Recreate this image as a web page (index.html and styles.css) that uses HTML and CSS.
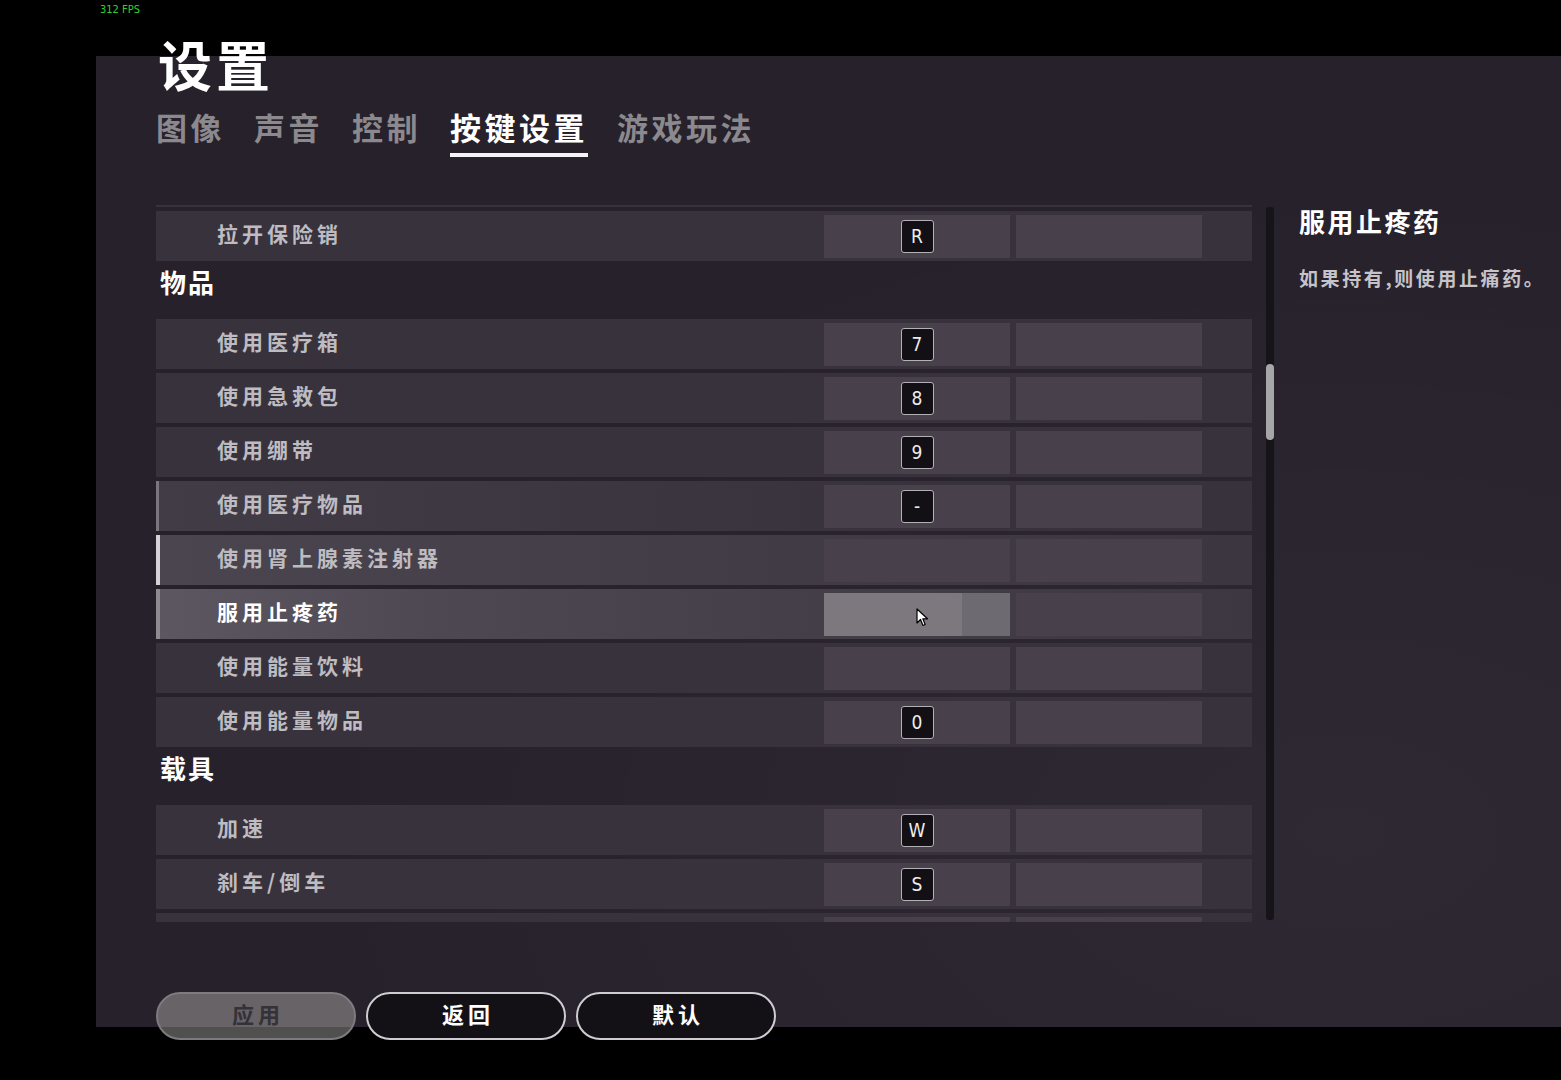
FILE: index.html
```html
<!DOCTYPE html>
<html lang="zh-CN">
<head>
    <meta charset="UTF-8">
    <meta name="viewport" content="width=device-width, initial-scale=1.0">
    <title>设置</title>
    <link rel="stylesheet" href="styles.css">
</head>
<body>
    <div class="screen">
        <div class="fps">312 FPS</div>
        <div class="panel">
            <h1 class="title">设置</h1>
            <nav class="tabs">
                <span class="tab">图像</span>
                <span class="tab">声音</span>
                <span class="tab">控制</span>
                <span class="tab active">按键设置</span>
                <span class="tab">游戏玩法</span>
            </nav>

            <div class="content">
                <div class="list-view">
                    <div class="list">
                        <!-- scrolled past, only its bottom edge shows -->
                        <div class="row">
                            <span class="label"></span>
                            <div class="cell"></div>
                            <div class="cell"></div>
                        </div>
                        <div class="row">
                            <span class="label">拉开保险销</span>
                            <div class="cell"><span class="key">R</span></div>
                            <div class="cell"></div>
                        </div>

                        <div class="section">物品</div>
                        <div class="row">
                            <span class="label">使用医疗箱</span>
                            <div class="cell"><span class="key">7</span></div>
                            <div class="cell"></div>
                        </div>
                        <div class="row">
                            <span class="label">使用急救包</span>
                            <div class="cell"><span class="key">8</span></div>
                            <div class="cell"></div>
                        </div>
                        <div class="row">
                            <span class="label">使用绷带</span>
                            <div class="cell"><span class="key">9</span></div>
                            <div class="cell"></div>
                        </div>
                        <div class="row fade-1">
                            <span class="label">使用医疗物品</span>
                            <div class="cell"><span class="key">-</span></div>
                            <div class="cell"></div>
                        </div>
                        <div class="row fade-2">
                            <span class="label">使用肾上腺素注射器</span>
                            <div class="cell"></div>
                            <div class="cell"></div>
                        </div>
                        <div class="row selected">
                            <span class="label">服用止疼药</span>
                            <div class="cell focus">
                                <svg class="cursor" width="13" height="19" viewBox="0 0 13 19">
                                    <path d="M1 1 L1 15 L4.5 11.5 L7 17.5 L9.2 16.5 L6.8 10.8 L11.5 10.8 Z" fill="#fff" stroke="#000" stroke-width="1.2" stroke-linejoin="round"/>
                                </svg>
                            </div>
                            <div class="cell"></div>
                        </div>
                        <div class="row">
                            <span class="label">使用能量饮料</span>
                            <div class="cell"></div>
                            <div class="cell"></div>
                        </div>
                        <div class="row">
                            <span class="label">使用能量物品</span>
                            <div class="cell"><span class="key">0</span></div>
                            <div class="cell"></div>
                        </div>

                        <div class="section">载具</div>
                        <div class="row">
                            <span class="label">加速</span>
                            <div class="cell"><span class="key">W</span></div>
                            <div class="cell"></div>
                        </div>
                        <div class="row">
                            <span class="label">刹车/倒车</span>
                            <div class="cell"><span class="key">S</span></div>
                            <div class="cell"></div>
                        </div>
                        <!-- cut by the bottom edge -->
                        <div class="row">
                            <span class="label"></span>
                            <div class="cell"><span class="key"></span></div>
                            <div class="cell"></div>
                        </div>
                    </div>
                </div>

                <div class="scrollbar"><div class="thumb"></div></div>

                <aside class="detail">
                    <h2 class="detail-title">服用止疼药</h2>
                    <p class="detail-text">如果持有,则使用止痛药。</p>
                </aside>
            </div>

            <div class="actions">
                <button class="btn disabled">应用</button>
                <button class="btn">返回</button>
                <button class="btn">默认</button>
            </div>
        </div>
    </div>
</body>
</html>
```

FILE: styles.css
```css
body {
    margin: 0;
    padding: 0;
    background: #000;
    font-family: "Noto Sans CJK SC", "Noto Sans", sans-serif;
    color: #fff;
}
.screen {
    width: 1561px;
    height: 1080px;
    overflow: hidden;
    padding-left: 96px;
    box-sizing: border-box;
}
.fps {
    height: 56px;
    box-sizing: border-box;
    padding: 3px 0 0 4px;
    font-family: "DejaVu Sans Condensed", "Roboto", sans-serif;
    font-size: 11px;
    color: #2fd22f;
}
.panel {
    display: flow-root;
    height: 971px;
    padding-left: 60px;
    background:
        radial-gradient(ellipse at 85% 80%, rgba(255,255,255,.035), transparent 60%),
        #27212c;
}
.title {
    margin: -22px 0 0 2px;
    font-size: 54px;
    line-height: 60px;
    font-weight: 700;
    letter-spacing: 4px;
    color: #fff;
}
.tabs {
    display: flex;
    gap: 29px;
    margin-top: 13px;
}
.tab {
    font-size: 31px;
    line-height: 40px;
    font-weight: 700;
    letter-spacing: 3.5px;
    color: #8b898e;
    padding-bottom: 6px;
    border-bottom: 4px solid transparent;
}
.tab.active {
    color: #fff;
    border-bottom-color: #f4f4f4;
}

/* list + detail */
.content {
    display: flex;
    align-items: flex-start;
    margin-top: 48px;
}
.list-view {
    width: 1096px;
    height: 717px;
    overflow: hidden;
}
.list {
    margin-top: -48px;
}
.row {
    display: flex;
    align-items: center;
    height: 50px;
    margin-bottom: 4px;
    padding-right: 50px;
    background: #38323c;
    box-sizing: border-box;
}
.label {
    flex-grow: 1;
    padding: 0 0 6px 61px;
    font-size: 21px;
    font-weight: 700;
    letter-spacing: 4px;
    color: #bebcc1;
}
.cell {
    position: relative;
    width: 186px;
    height: 43px;
    margin-left: 6px;
    background: #48414c;
    display: flex;
    align-items: center;
    justify-content: center;
}
.key {
    width: 31px;
    height: 31px;
    border: 1px solid #b3b0b6;
    border-radius: 3px;
    background: #121014;
    color: #ececec;
    font-family: "DejaVu Sans Condensed", "Roboto", sans-serif;
    font-size: 19px;
    line-height: 31px;
    text-align: center;
}
.section {
    height: 54px;
    box-sizing: border-box;
    padding: 2px 0 0 4px;
    font-size: 26px;
    line-height: 30px;
    font-weight: 700;
    letter-spacing: 2px;
    color: #fff;
}

.row.fade-1 {
    background: linear-gradient(to right, #423c46, #38323c 70%);
    box-shadow: inset 3px 0 #7a767e;
}
.row.fade-2 {
    background: linear-gradient(to right, #4b4550, #413b45 60%, #3c3640);
    box-shadow: inset 4px 0 #d4d2d6;
}
.row.selected {
    background: linear-gradient(to right, #5c5761, #4e4853 25%, #443e48 60%, #3d3741);
    box-shadow: inset 4px 0 #8d8a90;
}
.row.selected .label {
    color: #fff;
}
.cell.focus {
    background: linear-gradient(to right, #7c787e 74%, #6e6a71 74%);
}
.cursor {
    position: absolute;
    left: 92px;
    top: 15px;
}

.scrollbar {
    width: 8px;
    height: 713px;
    margin: 2px 0 0 14px;
    background: #171419;
    border-radius: 3px;
}
.thumb {
    height: 76px;
    margin-top: 157px;
    background: #a6a5a8;
    border-radius: 4px;
}
.detail {
    padding: 1px 0 0 25px;
}
.detail-title {
    margin: 0;
    font-size: 26px;
    line-height: 30px;
    font-weight: 700;
    letter-spacing: 2.5px;
    color: #fff;
}
.detail-text {
    margin: 29px 0 0;
    font-size: 19px;
    line-height: 26px;
    font-weight: 700;
    letter-spacing: 2.6px;
    color: #c6c4c8;
}

/* buttons */
.actions {
    display: flex;
    gap: 10px;
    margin-top: 70px;
}
.btn {
    width: 200px;
    height: 48px;
    border: 2px solid #cfcdd1;
    border-radius: 24px;
    background: #141116;
    color: #fff;
    font-family: "Noto Sans CJK SC", sans-serif;
    font-size: 22px;
    line-height: 30px;
    font-weight: 700;
    letter-spacing: 4px;
    padding: 0 0 6px 4px;
}
.btn.disabled {
    border-color: #7d7a80;
    background: rgba(195,195,190,.41);
    color: #343238;
}
```
